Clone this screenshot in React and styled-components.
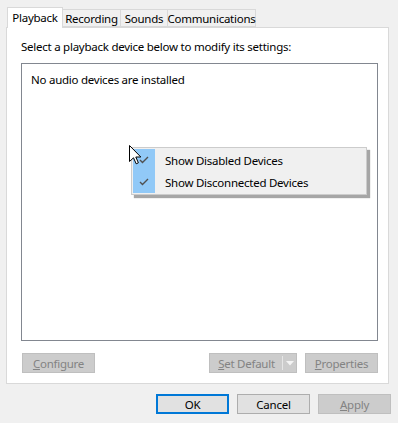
import styled, { createGlobalStyle } from 'styled-components';

const GlobalStyle = createGlobalStyle`
  html, body {
    margin: 0;
    padding: 0;
    background: #f0f0f0;
  }
  body {
    font-family: "Noto Sans", "Open Sans", sans-serif;
    font-size: 11.5px;
    letter-spacing: -0.25px;
    color: #000;
  }
`;

const Window = styled.div`
  position: relative;
  width: 398px;
  height: 423px;
  box-sizing: border-box;
  padding: 7px 9px 0 6px;
  background: #f0f0f0;
`;

const TabStrip = styled.div`
  display: flex;
  align-items: flex-end;
  height: 20px;
  padding-left: 1px;
  position: relative;
  z-index: 1;
`;

const Tab = styled.div`
  box-sizing: border-box;
  width: ${p => p.$w}px;
  height: ${p => (p.$active ? 21 : 18)}px;
  margin-bottom: ${p => (p.$active ? -1 : 0)}px;
  background: ${p => (p.$active ? '#fff' : '#f0f0f0')};
  border: 1px solid #d9d9d9;
  border-bottom: ${p => (p.$active ? 'none' : '1px solid #d9d9d9')};
  border-left: ${p => (p.$first ? '1px solid #d9d9d9' : 'none')};
  display: flex;
  align-items: center;
  justify-content: center;
  padding-bottom: ${p => (p.$active ? 2 : 0)}px;
  white-space: nowrap;
`;

const Panel = styled.div`
  box-sizing: border-box;
  height: 357px;
  background: #fff;
  border: 1px solid #d9d9d9;
  padding: 10px 10px 0 14px;
  display: flex;
  flex-direction: column;
`;

const Prompt = styled.div`
  height: 18px;
  line-height: 18px;
  margin-bottom: 7px;
`;

const ListBox = styled.div`
  box-sizing: border-box;
  height: 278px;
  border: 1px solid #828790;
  padding: 7px 9px;
  line-height: 18px;
`;

const ButtonRow = styled.div`
  display: flex;
  align-items: center;
  margin-top: 12px;
  padding-left: 1px;
`;

const Button = styled.div`
  box-sizing: border-box;
  width: ${p => p.$w || 73}px;
  height: 20px;
  display: flex;
  align-items: center;
  justify-content: center;
  background: ${p => (p.$disabled ? '#cccccc' : '#e1e1e1')};
  border: ${p => (p.$default ? '2px solid #0078d7' : p.$disabled ? '1px solid #bfbfbf' : '1px solid #adadad')};
  color: ${p => (p.$disabled ? '#838383' : '#000')};
  margin-left: ${p => p.$gap || 0}px;
  position: relative;
  white-space: nowrap;
`;

const Key = styled.span`
  text-decoration: underline;
`;

const Spacer = styled.div`
  flex: 1;
`;

const SplitArrow = styled.div`
  position: absolute;
  right: 0;
  top: 2px;
  bottom: 2px;
  width: 13px;
  border-left: 1px solid #e6e6e6;
  display: flex;
  align-items: center;
  justify-content: center;
`;

const Footer = styled.div`
  display: flex;
  justify-content: flex-end;
  gap: 8px;
  margin-top: 10px;
  margin-right: -2px;
`;

const Menu = styled.div`
  position: absolute;
  left: 131px;
  top: 147px;
  width: 236px;
  box-sizing: border-box;
  padding: 1px 1px;
  background: #f0f0f0;
  border: 1px solid #cccccc;
  box-shadow: 3px 3px 1px rgba(0, 0, 0, 0.35);
`;

const MenuItem = styled.div`
  display: flex;
  align-items: center;
  height: 22px;
`;

const CheckCell = styled.div`
  width: 22px;
  height: 22px;
  background: #91c9f7;
  display: flex;
  align-items: center;
  justify-content: center;
  margin-right: 10px;
`;

const Cursor = styled.svg`
  position: absolute;
  left: 129px;
  top: 145px;
`;

const Check = () => (
  <svg width="10" height="8" viewBox="0 0 10 8">
    <path d="M1 4 L3.5 6.5 L9 1" fill="none" stroke="#505050" strokeWidth="1.4" />
  </svg>
);

export default function App() {
  return (
    <Window>
      <GlobalStyle />
      <TabStrip>
        <Tab $active $first $w={56}>Playback</Tab>
        <Tab $w={58}>Recording</Tab>
        <Tab $w={47}>Sounds</Tab>
        <Tab $w={88}>Communications</Tab>
      </TabStrip>
      <Panel>
        <Prompt>Select a playback device below to modify its settings:</Prompt>
        <ListBox>No audio devices are installed</ListBox>
        <ButtonRow>
          <Button $disabled><Key>C</Key>onfigure</Button>
          <Spacer />
          <Button $disabled $w={88}>
            <span style={{ marginRight: 13 }}><Key>S</Key>et Default</span>
            <SplitArrow>
              <svg width="8" height="5" viewBox="0 0 8 5">
                <path d="M0 0 H8 L4 4.5 Z" fill="#f4f4f4" />
              </svg>
            </SplitArrow>
          </Button>
          <Button $disabled $gap={8}><Key>P</Key>roperties</Button>
        </ButtonRow>
      </Panel>
      <Footer>
        <Button $default>OK</Button>
        <Button>Cancel</Button>
        <Button $disabled><Key>A</Key>pply</Button>
      </Footer>
      <Menu>
        <MenuItem>
          <CheckCell><Check /></CheckCell>
          Show Disabled Devices
        </MenuItem>
        <MenuItem>
          <CheckCell><Check /></CheckCell>
          Show Disconnected Devices
        </MenuItem>
      </Menu>
      <Cursor width="13" height="20" viewBox="0 0 13 20">
        <path d="M0.5 0.5 L0.5 16.5 L4.5 12.8 L7.2 18.8 L9.4 17.8 L6.8 12 L11.8 12 Z" fill="#fff" stroke="#000" strokeWidth="1" strokeLinejoin="miter" />
      </Cursor>
    </Window>
  );
}
